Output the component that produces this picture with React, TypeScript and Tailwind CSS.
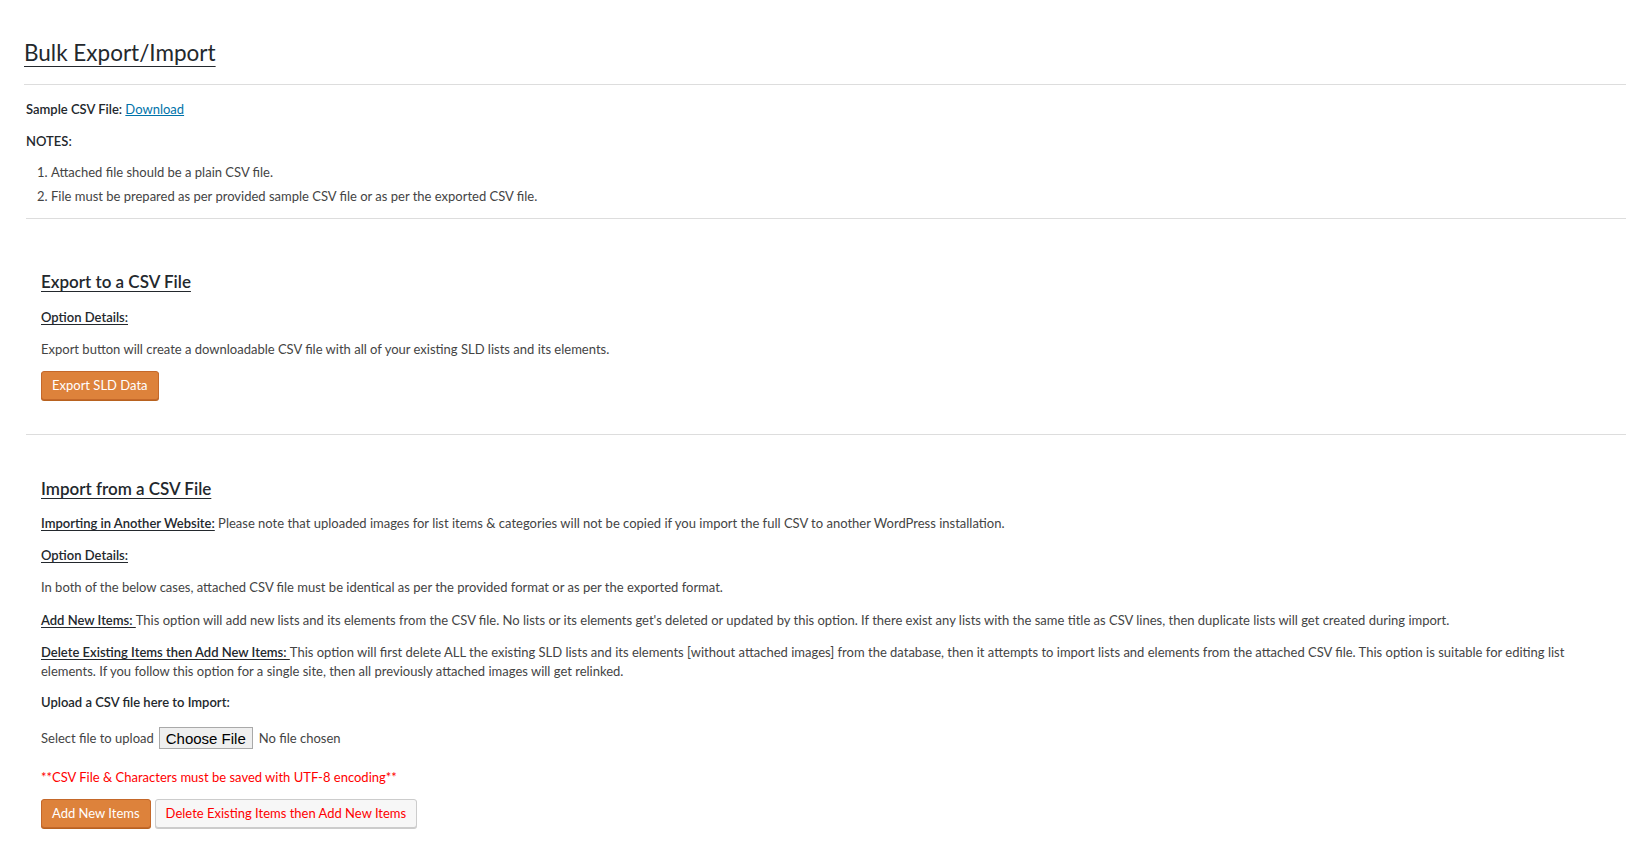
const notes = [
  "Attached file should be a plain CSV file.",
  "File must be prepared as per provided sample CSV file or as per the exported CSV file.",
];

function Label({ children }: { children: React.ReactNode }) {
  return <span className="font-semibold text-[#23282d] underline underline-offset-2">{children}</span>;
}

function OrangeButton({ children }: { children: React.ReactNode }) {
  return (
    <button className="h-[29px] rounded-[3px] border border-[#c4682a] bg-[#dd823b] px-[10px] text-[13px] leading-[27px] text-white shadow-[0_1px_0_#b8621f]">
      {children}
    </button>
  );
}

export default function App() {
  return (
    <div className="min-h-screen bg-white font-['Lato','Open_Sans',sans-serif] text-[13px] leading-[19px] text-[#444]">
      <div className="pl-[24px] pr-[16px] pt-[38px]">
        <h1 className="text-[22.5px] leading-[30px] text-[#23282d] underline decoration-1 underline-offset-[5px]">
          Bulk Export/Import
        </h1>
        <hr className="mt-[16px] border-[#ddd]" />

        <div className="pl-[2px]">
          <p className="mt-[15px] font-semibold text-[#23282d]">
            Sample CSV File:{" "}
            <a href="#" className="font-normal text-[#0073aa] underline">
              Download
            </a>
          </p>
          <p className="mt-[13px] font-semibold text-[#23282d]">NOTES:</p>
          <ol className="mt-[12px] list-decimal pl-[25px]">
            {notes.map((note, i) => (
              <li key={note} className={i ? "mt-[5px]" : ""}>
                {note}
              </li>
            ))}
          </ol>
          <hr className="mt-[12px] border-[#ddd]" />

          {/* export */}
          <div className="pl-[15px]">
            <h3 className="mt-[52px] text-[17px] leading-[22px] font-semibold text-[#23282d] underline underline-offset-[3px]">
              Export to a CSV File
            </h3>
            <p className="mt-[15px]">
              <Label>Option Details:</Label>
            </p>
            <p className="mt-[13px]">
              Export button will create a downloadable CSV file with all of your existing SLD lists and its elements.
            </p>
            <div className="mt-[12px]">
              <OrangeButton>Export SLD Data</OrangeButton>
            </div>
          </div>
          <hr className="mt-[34px] border-[#ddd]" />

          {/* import */}
          <div className="pl-[15px] pr-[30px] pb-[14px]">
            <h3 className="mt-[43px] text-[17px] leading-[22px] font-semibold text-[#23282d] underline underline-offset-[3px]">
              Import from a CSV File
            </h3>
            <p className="mt-[14px]">
              <Label>Importing in Another Website:</Label> Please note that uploaded images for list items &amp;
              categories will not be copied if you import the full CSV to another WordPress installation.
            </p>
            <p className="mt-[13px]">
              <Label>Option Details:</Label>
            </p>
            <p className="mt-[13px]">
              In both of the below cases, attached CSV file must be identical as per the provided format or as per the
              exported format.
            </p>
            <p className="mt-[14px]">
              <Label>Add New Items: </Label>This option will add new lists and its elements from the CSV file. No lists
              or its elements get's deleted or updated by this option. If there exist any lists with the same title as
              CSV lines, then duplicate lists will get created during import.
            </p>
            <p className="mt-[13px]">
              <Label>Delete Existing Items then Add New Items: </Label>This option will first delete ALL the existing
              SLD lists and its elements [without attached images] from the database, then it attempts to import lists
              and elements from the attached CSV file. This option is suitable for editing list elements. If you follow
              this option for a single site, then all previously attached images will get relinked.
            </p>
            <p className="mt-[12px] font-semibold text-[#23282d]">Upload a CSV file here to Import:</p>
            <div className="mt-[15px] flex h-[22px] items-center">
              <span>Select file to upload</span>
              <span className="ml-[5px] flex h-[22px] items-center border border-[#a9a9a9] bg-[#efefef] px-[6px] font-['Liberation_Sans',Arial,sans-serif] text-[15px] text-black">
                Choose File
              </span>
              <span className="ml-[6px]">No file chosen</span>
            </div>
            <p className="mt-[19px] text-[#ff0000]">**CSV File &amp; Characters must be saved with UTF-8 encoding**</p>
            <div className="mt-[12px] flex gap-[4px]">
              <OrangeButton>Add New Items</OrangeButton>
              <button className="h-[29px] rounded-[3px] border border-[#ccc] bg-[#f7f7f7] px-[10px] text-[13px] leading-[27px] text-[#ff0000] shadow-[0_1px_0_#ccc]">
                Delete Existing Items then Add New Items
              </button>
            </div>
          </div>
        </div>
      </div>
    </div>
  );
}
